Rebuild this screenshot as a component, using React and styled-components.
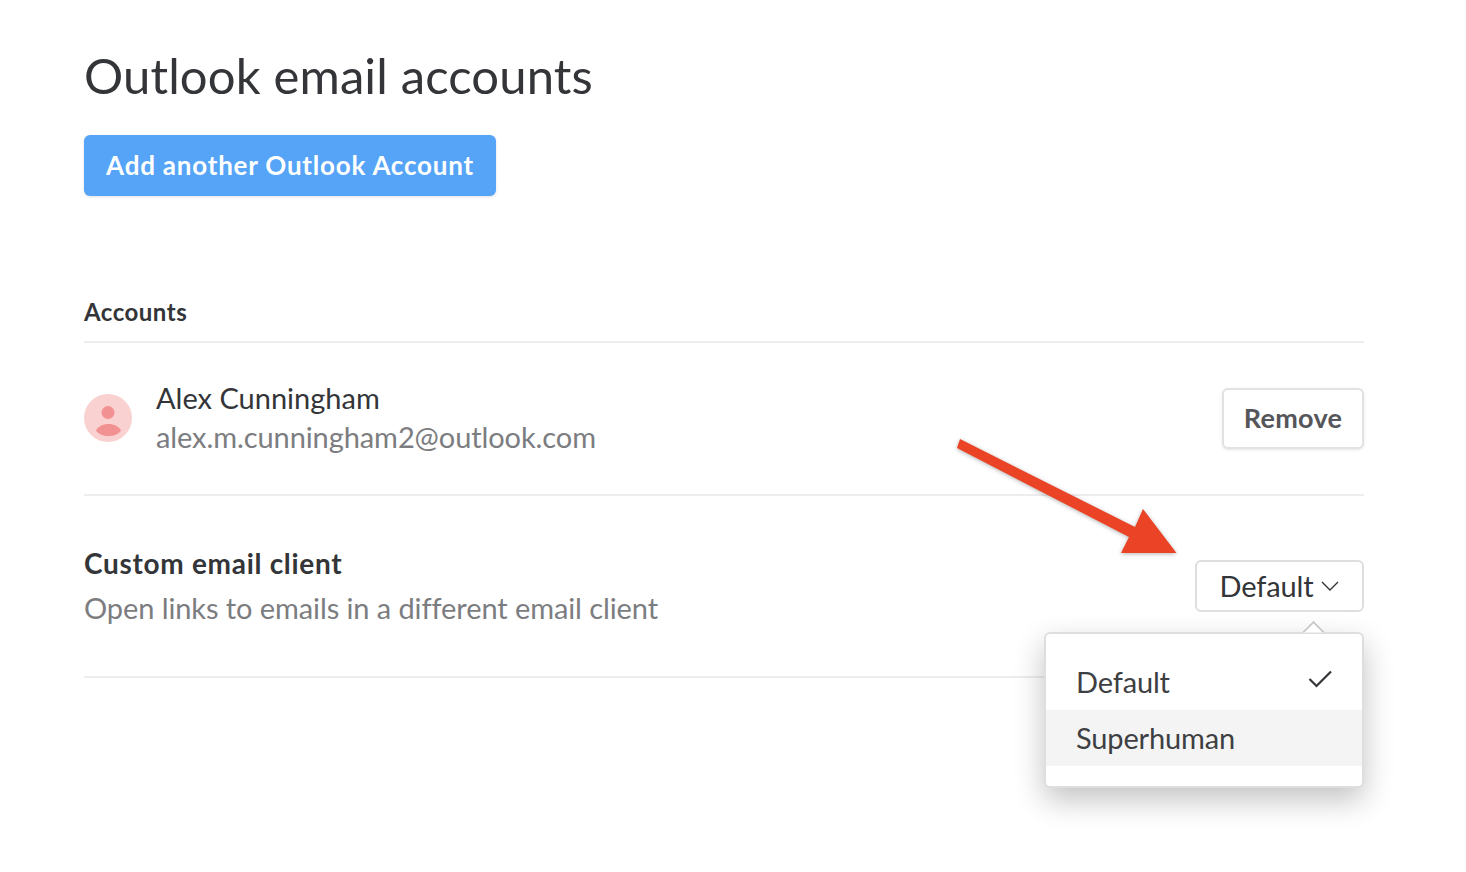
import React from 'react';
import styled, { createGlobalStyle } from 'styled-components';

const GlobalStyle = createGlobalStyle`
    html, body {
        margin: 0;
        padding: 0;
        background: #FFFFFF;
        font-family: 'Lato', 'Open Sans', sans-serif;
    }
`;

const Page = styled.div`
    position: relative;
    width: 1466px;
    height: 872px;
    box-sizing: border-box;
    padding: 45px 102px 0 84px;
    overflow: hidden;
`;

const Title = styled.h1`
    margin: 0;
    height: 60px;
    line-height: 60px;
    font-size: 49px;
    font-weight: 400;
    letter-spacing: 0.14px;
    color: #333538;
`;

const PrimaryButton = styled.button`
    display: block;
    width: 412px;
    height: 61px;
    margin-top: 30px;
    padding: 0 0 2px;
    border: none;
    border-radius: 6px;
    background: #55A4F8;
    box-shadow: 0 1px 3px rgba(0, 0, 0, 0.12);
    color: #FFFFFF;
    font-family: inherit;
    font-size: 26px;
    font-weight: 700;
    letter-spacing: 0.78px;
`;

const SectionHeader = styled.div`
    margin-top: 97px;
    height: 50px;
    box-sizing: border-box;
    padding-top: 3px;
    border-bottom: 2px solid #EDEDED;
    font-size: 24px;
    line-height: 32px;
    font-weight: 700;
    letter-spacing: 0.5px;
    color: #333538;
`;

const Row = styled.div`
    display: flex;
    align-items: ${(p) => p.$align || 'center'};
    justify-content: space-between;
    height: ${(p) => p.$height}px;
    box-sizing: border-box;
    border-bottom: 2px solid #EDEDED;
`;

const AccountInfo = styled.div`
    display: flex;
    align-items: center;
    gap: 24px;
`;

const Avatar = styled.svg`
    width: 48px;
    height: 48px;
    display: block;
    margin-top: -1px;
`;

const NameBlock = styled.div`
    display: flex;
    flex-direction: column;
    gap: 7px;
    margin-top: -3px;
`;

const Name = styled.div`
    font-size: 29px;
    line-height: 32px;
    color: #333538;
`;

const Muted = styled.div`
    font-size: 29px;
    line-height: 32px;
    letter-spacing: -0.09px;
    color: #7C7D80;
`;

const GhostButton = styled.button`
    width: 142px;
    height: 61px;
    margin-top: -1px;
    padding: 0 0 2px;
    background: #FFFFFF;
    border: 2px solid #E2E2E2;
    border-radius: 6px;
    box-shadow: 0 1px 3px rgba(0, 0, 0, 0.1);
    color: #55565A;
    font-family: inherit;
    font-size: 27px;
    font-weight: 700;
    letter-spacing: 0.3px;
`;

const ClientInfo = styled.div`
    padding-top: 51px;
    display: flex;
    flex-direction: column;
    gap: 13px;
`;

const ClientTitle = styled.div`
    font-size: 28px;
    line-height: 32px;
    font-weight: 700;
    letter-spacing: 0.7px;
    color: #333538;
`;

const SelectWrap = styled.div`
    margin-top: 64px;
`;

const SelectButton = styled.button`
    display: flex;
    align-items: center;
    justify-content: center;
    gap: 8px;
    width: 169px;
    height: 52px;
    padding: 0 0 2px;
    background: #FFFFFF;
    border: 2px solid #DEDEDE;
    border-radius: 6px;
    color: #333538;
    font-family: inherit;
    font-size: 29px;
    letter-spacing: -0.15px;
`;

const Chevron = styled.svg`
    width: 18px;
    height: 10px;
    display: block;
    margin-top: 2px;
`;

const Arrow = styled.svg`
    position: absolute;
    left: 940px;
    top: 430px;
    width: 250px;
    height: 135px;
    overflow: visible;
    filter: drop-shadow(0 1px 2px rgba(0, 0, 0, 0.3));
`;

const Menu = styled.div`
    position: absolute;
    left: 1044px;
    top: 632px;
    width: 320px;
    height: 156px;
    box-sizing: border-box;
    padding-top: 20px;
    background: #FFFFFF;
    border: 2px solid #DEDEDE;
    border-radius: 6px;
    box-shadow: 0 12px 30px rgba(0, 0, 0, 0.24);
`;

const MenuCaret = styled.span`
    position: absolute;
    left: 259px;
    top: -10px;
    width: 17px;
    height: 17px;
    box-sizing: border-box;
    background: #FFFFFF;
    border-left: 2px solid #C8C8C8;
    border-top: 2px solid #C8C8C8;
    transform: rotate(45deg);
    clip-path: polygon(0 0, 100% 0, 0 100%);
`;

const MenuItem = styled.div`
    display: flex;
    align-items: center;
    justify-content: space-between;
    height: 56px;
    box-sizing: border-box;
    padding: 0 30px 2px 30px;
    background: ${(p) => (p.$active ? '#F4F4F4' : '#FFFFFF')};
    color: #3E3F42;
    font-size: 29px;
    letter-spacing: -0.15px;
`;

const Check = styled.svg`
    width: 24px;
    height: 18px;
    display: block;
    margin-top: -5px;
`;

const App = () => {
    return (
        <Page>
            <GlobalStyle />
            <Title>Outlook email accounts</Title>
            <PrimaryButton>Add another Outlook Account</PrimaryButton>
            <SectionHeader>Accounts</SectionHeader>
            <Row $height={153}>
                <AccountInfo>
                    <Avatar viewBox="0 0 48 48">
                        <circle cx="24" cy="24" r="24" fill="#FAD1D1" />
                        <circle cx="24" cy="18.5" r="6.5" fill="#F29191" />
                        <path d="M12 36.500C14 32.500 19 30 24.500 30S35 32.500 37 36.500C35 40 30 42 24.500 42S14 40 12 36.500Z" fill="#F29191" />
                    </Avatar>
                    <NameBlock>
                        <Name>Alex Cunningham</Name>
                        <Muted>alex.m.cunningham2@outlook.com</Muted>
                    </NameBlock>
                </AccountInfo>
                <GhostButton>Remove</GhostButton>
            </Row>
            <Row $height={182} $align="flex-start">
                <ClientInfo>
                    <ClientTitle>Custom email client</ClientTitle>
                    <Muted>Open links to emails in a different email client</Muted>
                </ClientInfo>
                <SelectWrap>
                    <SelectButton>
                        Default
                        <Chevron viewBox="0 0 18 10">
                            <path d="M1 1l8 8 8-8" fill="none" stroke="#333538" strokeWidth="1.4" />
                        </Chevron>
                    </SelectButton>
                </SelectWrap>
            </Row>
            <Arrow viewBox="0 0 250 135">
                <path d="M20 9L195 97L203 79L236.500 123L181 123L189 107L17 18Z" fill="#EA4325" />
            </Arrow>
            <Menu>
                <MenuCaret />
                <MenuItem>
                    Default
                    <Check viewBox="0 0 24 18">
                        <path d="M1.500 9l7 7L23 1.500" fill="none" stroke="#333538" strokeWidth="2.200" />
                    </Check>
                </MenuItem>
                <MenuItem $active>Superhuman</MenuItem>
            </Menu>
        </Page>
    );
};

export default App;
